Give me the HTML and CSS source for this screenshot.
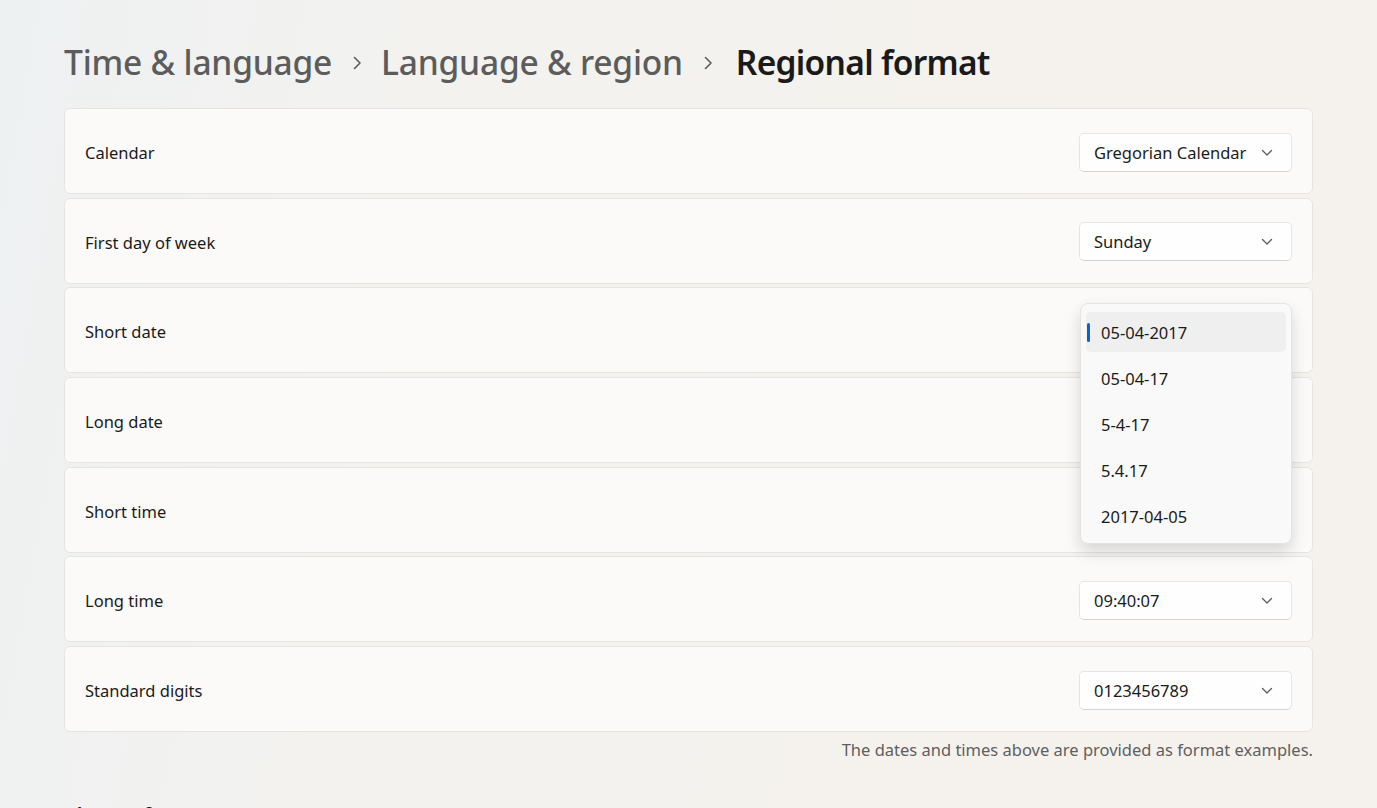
FILE: index.html
```html
<!DOCTYPE html>
<html>
<head>
<meta charset="utf-8">
<link rel="stylesheet" href="styles.css">
</head>
<body>
<main class="page">
  <h1 class="crumbs">
    <span class="crumb">Time &amp; language</span>
    <svg class="sep" viewBox="0 0 12 16" width="12" height="16"><path d="M3.5 2.5 L9 8 L3.5 13.5" fill="none" stroke="#5d5d5d" stroke-width="1.6" stroke-linecap="round" stroke-linejoin="round"/></svg>
    <span class="crumb">Language &amp; region</span>
    <svg class="sep" viewBox="0 0 12 16" width="12" height="16"><path d="M3.5 2.5 L9 8 L3.5 13.5" fill="none" stroke="#5d5d5d" stroke-width="1.6" stroke-linecap="round" stroke-linejoin="round"/></svg>
    <span class="crumb current">Regional format</span>
  </h1>

  <section class="list">
    <div class="card"><span class="label">Calendar</span><div class="combo"><span>Gregorian Calendar</span><svg class="chev" viewBox="0 0 12 8" width="12" height="8"><path d="M1.5 1.5 L6 6 L10.5 1.5" fill="none" stroke="#5c5c5c" stroke-width="1.3" stroke-linecap="round" stroke-linejoin="round"/></svg></div></div>
    <div class="card"><span class="label">First day of week</span><div class="combo"><span>Sunday</span><svg class="chev" viewBox="0 0 12 8" width="12" height="8"><path d="M1.5 1.5 L6 6 L10.5 1.5" fill="none" stroke="#5c5c5c" stroke-width="1.3" stroke-linecap="round" stroke-linejoin="round"/></svg></div></div>
    <div class="card"><span class="label">Short date</span></div>
    <div class="card"><span class="label">Long date</span></div>
    <div class="card"><span class="label">Short time</span></div>
    <div class="card"><span class="label">Long time</span><div class="combo"><span>09:40:07</span><svg class="chev" viewBox="0 0 12 8" width="12" height="8"><path d="M1.5 1.5 L6 6 L10.5 1.5" fill="none" stroke="#5c5c5c" stroke-width="1.3" stroke-linecap="round" stroke-linejoin="round"/></svg></div></div>
    <div class="card"><span class="label">Standard digits</span><div class="combo"><span>0123456789</span><svg class="chev" viewBox="0 0 12 8" width="12" height="8"><path d="M1.5 1.5 L6 6 L10.5 1.5" fill="none" stroke="#5c5c5c" stroke-width="1.3" stroke-linecap="round" stroke-linejoin="round"/></svg></div></div>
  </section>

  <p class="note">The dates and times above are provided as format examples.</p>

  <h2 class="section">Change formats</h2>

  <div class="popup">
    <div class="opt selected"><span class="pill"></span>05-04-2017</div>
    <div class="opt">05-04-17</div>
    <div class="opt">5-4-17</div>
    <div class="opt">5.4.17</div>
    <div class="opt">2017-04-05</div>
  </div>
</main>
</body>
</html>
```

FILE: styles.css
```css
html, body {
  margin: 0;
  height: 100%;
  overflow: hidden;
}
body {
  background: linear-gradient(100deg, #eef1f2 0%, #f3f2ef 30%, #f5f2ed 70%, #f5f2ed 100%);
  font-family: "Noto Sans", "Open Sans", sans-serif;
  color: #1b1b1b;
}
.page {
  position: relative;
  padding: 0 64px;
  height: 808px;
}
.crumbs {
  margin: 0;
  height: 108px;
  display: flex;
  align-items: center;
  padding-top: 16px;
  box-sizing: border-box;
  font-size: 33.5px;
  font-weight: 500;
  letter-spacing: -0.2px;
}
.crumb {
  color: #5c5c5c;
}
.crumb.current {
  color: #1a1a1a;
  font-weight: 600;
  letter-spacing: -0.7px;
  margin-left: 4px;
}
.sep {
  margin: 2px 18px 0 19px;
}
.list {
  display: flex;
  flex-direction: column;
  gap: 3.7px;
}
.card {
  height: 86px;
  box-sizing: border-box;
  background: #fbfaf9;
  border: 1px solid #e7e5e2;
  border-radius: 6px;
  display: flex;
  align-items: center;
  justify-content: space-between;
  padding: 0 20px 0 20px;
}
.label {
  font-size: 16.5px;
  color: #1b1b1b;
  padding-top: 3px;
}
.combo {
  width: 213px;
  height: 39px;
  margin-top: 2px;
  box-sizing: border-box;
  background: #fefefe;
  border: 1px solid #e5e5e5;
  border-bottom-color: #d3d3d3;
  border-radius: 5px;
  display: flex;
  align-items: center;
  justify-content: space-between;
  padding: 0 18px 0 14px;
  font-size: 16.5px;
  color: #1b1b1b;
}
.chev {
  margin-top: 1px;
}
.note {
  margin: 6px 0 0;
  text-align: right;
  font-size: 16.5px;
  color: #5f5f5f;
}
.section {
  margin: 40px 0 0;
  font-size: 20px;
  font-weight: 600;
  color: #1b1b1b;
}
.popup {
  position: absolute;
  left: 1080px;
  top: 303px;
  width: 212px;
  height: 241px;
  box-sizing: border-box;
  background: #f9f9f9;
  border: 1px solid #e4e4e4;
  border-radius: 8px;
  box-shadow: 0 8px 16px rgba(0,0,0,0.14);
  padding: 8px 5px;
  display: flex;
  flex-direction: column;
  gap: 6px;
}
.opt {
  position: relative;
  height: 40px;
  display: flex;
  align-items: center;
  padding-left: 15px;
  font-size: 16.5px;
  color: #1b1b1b;
  border-radius: 5px;
  flex-shrink: 0;
}
.opt.selected {
  background: #efefef;
}
.pill {
  position: absolute;
  left: 1px;
  top: 11px;
  width: 3px;
  height: 19px;
  border-radius: 2px;
  background: #0a64c8;
}
```
